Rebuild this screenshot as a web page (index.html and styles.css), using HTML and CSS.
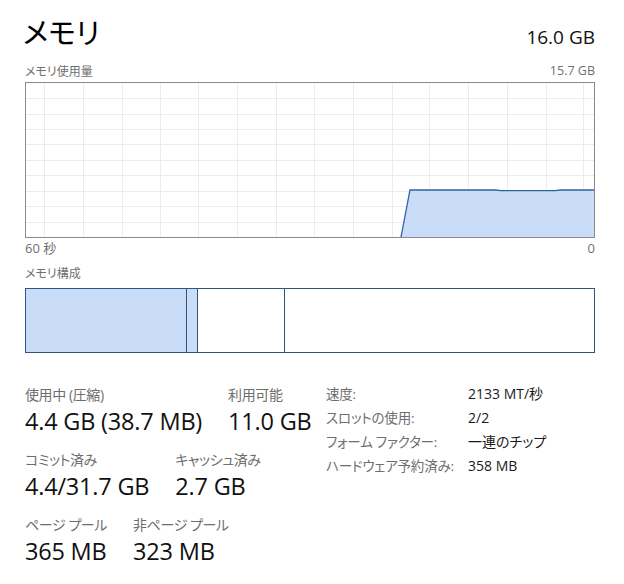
FILE: index.html
```html
<!DOCTYPE html>
<html lang="ja">
<head>
<meta charset="utf-8">
<title>メモリ</title>
<link rel="stylesheet" href="styles.css">
</head>
<body>
<main class="panel">
  <header class="head">
    <h1 class="title">メモリ</h1>
    <div class="total">16.0 GB</div>
  </header>

  <div class="caption">
    <span class="jp">メモリ使用量</span>
    <span>15.7 GB</span>
  </div>
  <div class="chart">
    <svg width="570" height="156" viewBox="0 0 570 156">
      <g class="grid">
        <line x1="19.5" y1="0" x2="19.5" y2="156"/>
        <line x1="58.5" y1="0" x2="58.5" y2="156"/>
        <line x1="97.5" y1="0" x2="97.5" y2="156"/>
        <line x1="135.5" y1="0" x2="135.5" y2="156"/>
        <line x1="173.5" y1="0" x2="173.5" y2="156"/>
        <line x1="212.5" y1="0" x2="212.5" y2="156"/>
        <line x1="251.5" y1="0" x2="251.5" y2="156"/>
        <line x1="289.5" y1="0" x2="289.5" y2="156"/>
        <line x1="328.5" y1="0" x2="328.5" y2="156"/>
        <line x1="367.5" y1="0" x2="367.5" y2="156"/>
        <line x1="404.5" y1="0" x2="404.5" y2="156"/>
        <line x1="443.5" y1="0" x2="443.5" y2="156"/>
        <line x1="482.5" y1="0" x2="482.5" y2="156"/>
        <line x1="521.5" y1="0" x2="521.5" y2="156"/>
        <line x1="558.5" y1="0" x2="558.5" y2="156"/>
        <line x1="0" y1="16.5" x2="570" y2="16.5"/>
        <line x1="0" y1="32.5" x2="570" y2="32.5"/>
        <line x1="0" y1="47.5" x2="570" y2="47.5"/>
        <line x1="0" y1="62.5" x2="570" y2="62.5"/>
        <line x1="0" y1="78.5" x2="570" y2="78.5"/>
        <line x1="0" y1="93.5" x2="570" y2="93.5"/>
        <line x1="0" y1="109.5" x2="570" y2="109.5"/>
        <line x1="0" y1="124.5" x2="570" y2="124.5"/>
        <line x1="0" y1="140.5" x2="570" y2="140.5"/>
      </g>
      <polygon class="area" points="376,155 385,108 470,108 476,108.6 530,108.6 536,108 569,108 569,155"/>
      <polyline class="line" points="376,155 385,108 470,108 476,108.6 530,108.6 536,108 569,108"/>
      <rect class="frame" x="0.5" y="0.5" width="569" height="155"/>
    </svg>
  </div>
  <div class="axis">
    <span>60 秒</span>
    <span>0</span>
  </div>

  <div class="caption comp-cap">
    <span class="jp">メモリ構成</span>
  </div>
  <div class="composition">
    <div class="seg inuse" style="width:161px"></div>
    <div class="seg modified" style="width:11px"></div>
    <div class="seg standby" style="width:87px"></div>
    <div class="seg free"></div>
  </div>

  <section class="stats">
    <div class="stats-main">
      <div class="stat-row">
        <div class="stat"><div class="label">使用中 (圧縮)</div><div class="value">4.4 GB (38.7 MB)</div></div>
        <div class="stat"><div class="label">利用可能</div><div class="value">11.0 GB</div></div>
      </div>
      <div class="stat-row">
        <div class="stat"><div class="label">コミット済み</div><div class="value">4.4/31.7 GB</div></div>
        <div class="stat"><div class="label">キャッシュ済み</div><div class="value">2.7 GB</div></div>
      </div>
      <div class="stat-row">
        <div class="stat"><div class="label">ページ プール</div><div class="value">365 MB</div></div>
        <div class="stat"><div class="label">非ページ プール</div><div class="value">323 MB</div></div>
      </div>
    </div>
    <dl class="details">
      <dt>速度:</dt><dd>2133 MT/秒</dd>
      <dt>スロットの使用:</dt><dd>2/2</dd>
      <dt>フォーム ファクター:</dt><dd>一連のチップ</dd>
      <dt>ハードウェア予約済み:</dt><dd>358 MB</dd>
    </dl>
  </section>
</main>
</body>
</html>
```

FILE: styles.css
```css
* { box-sizing: border-box; }

html, body {
  margin: 0;
  background: #ffffff;
}

body {
  font-family: "Open Sans", "Noto Sans CJK JP", sans-serif;
  font-feature-settings: "palt";
  color: #1a1a1a;
}

.panel {
  width: 570px;
  margin-left: 25px;
}

.head {
  display: flex;
  justify-content: space-between;
  align-items: baseline;
  height: 62px;
}

.title {
  margin: 0 0 0 -2px;
  font-family: "Noto Sans CJK JP", sans-serif;
  font-feature-settings: "palt";
  font-weight: 400;
  font-size: 29px;
  line-height: 62px;
  color: #000;
}

.total {
  font-size: 19px;
  color: #111;
}

.caption {
  display: flex;
  justify-content: space-between;
  font-size: 12.5px;
  line-height: 18px;
  color: #707070;
  height: 20px;
}

.jp {
  font-family: "Noto Sans CJK JP", sans-serif;
  font-feature-settings: "palt";
  font-size: 12px;
}

.chart {
  height: 156px;
}

.chart svg { display: block; }

.grid line {
  stroke: #ececec;
  stroke-width: 1;
}

.area {
  fill: #c9ddf8;
}

.line {
  fill: none;
  stroke: #2e63a6;
  stroke-width: 1.3;
}

.frame {
  fill: none;
  stroke: #8a8a8a;
  stroke-width: 1;
}

.axis {
  display: flex;
  justify-content: space-between;
  font-size: 13px;
  line-height: 20px;
  height: 20px;
  color: #707070;
}

.comp-cap {
  height: 30px;
  padding-top: 6px;
}

.composition {
  display: flex;
  height: 65px;
  border: 1px solid #2f5584;
}

.seg {
  border-right: 1px solid #2f5584;
  flex: none;
}

.seg.inuse, .seg.modified {
  background: #c9ddf8;
}

.seg.free {
  flex: 1;
  border-right: none;
}

.stats {
  display: flex;
  margin-top: 32px;
}

.stats-main {
  width: 301px;
  display: flex;
  flex-direction: column;
  gap: 13px;
}

.stat-row {
  display: flex;
  gap: 26px;
}

.label {
  font-size: 14px;
  line-height: 20px;
  color: #6e6e6e;
  letter-spacing: -0.4px;
}

.value {
  font-size: 23.5px;
  line-height: 32px;
  color: #111;
  letter-spacing: -0.2px;
}

.details {
  margin: -4px 0 0 0;
  display: grid;
  grid-template-columns: 142px auto;
  grid-auto-rows: 24px;
  align-content: start;
  align-items: center;
  font-size: 14px;
  color: #6e6e6e;
}

.details dt {
  font-size: 13.5px;
  letter-spacing: -0.2px;
}

.details dd {
  margin: 0;
  color: #1a1a1a;
}
```
